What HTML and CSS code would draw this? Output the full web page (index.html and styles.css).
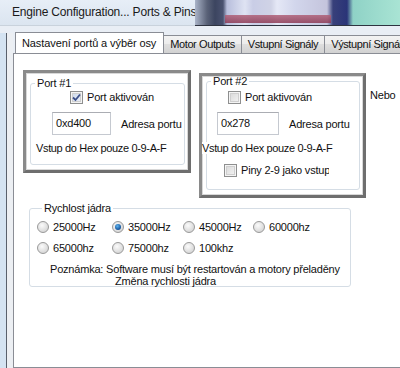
FILE: index.html
```html
<!DOCTYPE html>
<html>
<head>
<meta charset="utf-8">
<link rel="stylesheet" href="styles.css">
</head>
<body>
<div class="titlebar">
  <div class="title">Engine Configuration... Ports &amp; Pins</div>
  <div class="desk"><div class="desk-band"></div></div>
</div>
<div class="frame">
  <div class="tabs">
    <div class="tab active">Nastavení portů a výběr osy</div>
    <div class="tab">Motor Outputs</div>
    <div class="tab">Vstupní Signály</div>
    <div class="tab last">Výstupní Signály</div>
  </div>
  <div class="panel">
    <div class="ports">
      <div class="portbox p1">
        <fieldset class="grp">
          <legend>Port #1</legend>
          <div class="chk c1"><span class="cb checked"><svg width="9" height="9" viewBox="0 0 9 9"><path d="M1 4.5 L3.5 7 L8 1.5" fill="none" stroke="#3b4f8a" stroke-width="1.8"/></svg></span>Port aktivován</div>
          <div class="addr a1"><span class="input">0xd400</span><span class="lbl">Adresa portu</span></div>
          <div class="hint h1">Vstup do Hex pouze 0-9-A-F</div>
        </fieldset>
      </div>
      <div class="portbox p2">
        <fieldset class="grp">
          <legend>Port #2</legend>
          <div class="chk c2"><span class="cb"></span>Port aktivován</div>
          <div class="addr a2"><span class="input">0x278</span><span class="lbl">Adresa portu</span></div>
          <div class="hint h2">Vstup do Hex pouze 0-9-A-F</div>
          <div class="chk c3"><span class="cb"></span><span class="clip">Piny 2-9 jako vstupy</span></div>
        </fieldset>
      </div>
      <div class="nebo">Nebo</div>
    </div>
    <fieldset class="speed">
      <legend>Rychlost jádra</legend>
      <div class="radios">
        <div class="rd"><span class="rb"></span>25000Hz</div>
        <div class="rd"><span class="rb on"></span>35000Hz</div>
        <div class="rd"><span class="rb"></span>45000Hz</div>
        <div class="rd"><span class="rb"></span>60000hz</div>
        <div class="rd"><span class="rb"></span>65000hz</div>
        <div class="rd"><span class="rb"></span>75000hz</div>
        <div class="rd"><span class="rb"></span>100khz</div>
      </div>
      <div class="note">Poznámka: Software musí být restartován a motory přeladěny</div>
      <div class="note2">Změna rychlosti jádra</div>
    </fieldset>
  </div>
</div>
</body>
</html>
```
FILE: styles.css
```css
* { box-sizing: border-box; }
html, body { margin: 0; padding: 0; }
body {
  width: 400px;
  height: 368px;
  overflow: hidden;
  font-family: "Liberation Sans", Arial, sans-serif;
  font-size: 11px;
  letter-spacing: -0.2px;
  color: #111;
  background: #e9eef5;
}
.titlebar {
  display: flex;
  height: 26px;
}
.title {
  width: 195px;
  padding-left: 12px;
  font-size: 12px;
  letter-spacing: -0.2px;
  line-height: 25px;
  white-space: nowrap;
  overflow: hidden;
  color: #1a1a1a;
  background: linear-gradient(#e7eef7, #dbe5f0);
  border-bottom: 1px solid #c9d2dc;
}
.desk {
  flex: 1;
  position: relative;
  border-bottom: 1px solid #2e3340;
  background: linear-gradient(to right,
    #aab4c8 0, #5a6278 12px, #3c4560 20px, #4a5270 28px, #b8bedc 32px, #dfe3f3 50px, #c9cde6 58px, #d0d3e6 76px, #e5e8f6 82px,
    #d2d6ec 100px, #c4c4dc 132px, #38407a 138px, #2a3478 152px, #8fd2c6 158px, #a9e4d4 205px);
}
.desk-band {
  position: absolute;
  left: 30px;
  width: 106px;
  bottom: 2px;
  height: 8px;
  background: linear-gradient(#b06078, #8c3a55);
  opacity: 0.85;
}
.frame {
  height: 342px;
  padding: 6px 0 0 13px;
  background:
    linear-gradient(to right, #d4e3f2 0 6px, #59606c 6px 7px, #eceff3 7px 13px, transparent 13px) 0 7px / 100% 100% no-repeat,
    #e9eef5;
}
.tabs {
  display: flex;
  align-items: flex-end;
  height: 21px;
  padding-left: 2px;
  white-space: nowrap;
  overflow: hidden;
}
.tab {
  height: 18px;
  line-height: 17px;
  padding: 0 6px;
  letter-spacing: -0.4px;
  border: 1px solid #8a8d95;
  border-bottom: none;
  margin-left: -1px;
  background: linear-gradient(#f3f3f3, #ececec 45%, #dedede 50%, #d2d2d2);
  color: #111;
  flex: none;
}
.tab:first-child { margin-left: 0; }
.tab.active {
  height: 22px;
  line-height: 20px;
  margin-bottom: -1px;
  background: #fff;
  position: relative;
  z-index: 1;
  padding: 0 7px 0 6px;
  letter-spacing: -0.1px;
}
.panel {
  height: 315px;
  background: #fff;
  border: 1px solid #8a8d95;
  border-right: none;
  padding: 16px 0 0 9px;
}
.ports {
  display: flex;
  align-items: flex-start;
}
.portbox {
  border: 3px solid #7c7c7c;
  border-color: #8a8a8a #6e6e6e #6e6e6e #8a8a8a;
  box-shadow: inset 0 0 0 1px #d8d8d8;
  padding: 5px 3px 5px 4px;
  background: #fff;
  flex: none;
}
.p1 { width: 168px; height: 103px; }
.p2 { width: 167px; height: 125px; margin-left: 8px; margin-top: 3px; padding-top: 0; }
.grp {
  margin: 0;
  height: 100%;
  border: 1px solid #d5dde5;
  border-radius: 3px;
  padding: 0;
  position: relative;
}
.grp legend {
  padding: 0 2px;
  margin-left: 4px;
  line-height: 11px;
}
.chk {
  display: flex;
  align-items: center;
  height: 14px;
  white-space: nowrap;
}
.cb {
  width: 13px;
  height: 13px;
  border: 1px solid #8e8f8f;
  background: linear-gradient(135deg, #d6d6d6, #f6f6f6);
  box-shadow: inset 0 0 0 1px #f4f4f4, inset 0 0 0 2px #cfcfcf;
  margin-right: 4px;
  display: flex;
  align-items: center;
  justify-content: center;
  flex: none;
}
.cb.checked { background: linear-gradient(135deg, #c9d6ea, #eef2f9); }
.c1 { margin: 1px 0 0 39px; }
.c2 { margin: 3px 0 0 21px; }
.c3 { margin: 9px 0 0 17px; }
.clip { width: 88px; overflow: hidden; }
.addr {
  display: flex;
  align-items: center;
  white-space: nowrap;
}
.a1 { margin: 8px 0 0 21px; }
.a2 { margin: 8px 0 0 10px; }
.input {
  height: 23px;
  border: 1px solid #c5c9d0;
  border-top-color: #abadb3;
  padding: 3px 0 0 3px;
  line-height: 14px;
  background: #fff;
  flex: none;
}
.a1 .input { width: 59px; margin-right: 10px; }
.a2 .input { width: 62px; margin-right: 10px; }
.lbl { padding-top: 1px; }
.hint {
  white-space: nowrap;
  background: #fff;
  position: relative;
  letter-spacing: -0.35px;
}
.h1 { margin: 7px 0 0 5px; }
.h2 { margin: 7px 0 0 -5px; width: 140px; }
.nebo { margin: 19px 0 0 4px; }
.speed {
  margin: 5px 0 0 6px;
  width: 322px;
  height: 84px;
  border: 1px solid #d5dde5;
  border-radius: 3px;
  padding: 2px 0 0 7px;
}
.speed legend {
  padding: 0 2px;
  margin-left: 5px;
  line-height: 11px;
}
.radios {
  display: grid;
  grid-template-columns: 75px 71px 70px auto;
  grid-auto-rows: 21px;
}
.rd {
  display: flex;
  align-items: center;
  white-space: nowrap;
}
.rb {
  width: 12px;
  height: 12px;
  border-radius: 50%;
  border: 1px solid #999;
  background: radial-gradient(circle at 40% 35%, #fbfbfb, #d9d9d9 70%);
  margin-right: 4px;
  flex: none;
  position: relative;
}
.rb.on::after {
  content: "";
  position: absolute;
  left: 2px;
  top: 2px;
  width: 6px;
  height: 6px;
  border-radius: 50%;
  background: radial-gradient(circle at 40% 35%, #5fb4ee, #1b5ea6 60%, #0d3b72);
}
.note { margin: 5px 0 0 13px; white-space: nowrap; line-height: 12px; }
.note2 { margin: 0 0 0 78px; white-space: nowrap; line-height: 12px; }
```
